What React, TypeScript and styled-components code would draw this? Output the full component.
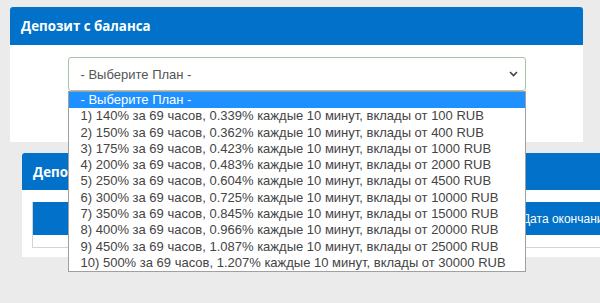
import React, { useState } from "react";
import styled, { createGlobalStyle } from "styled-components";

const GlobalStyle = createGlobalStyle`
  html {
    overflow: hidden;
    height: 100%;
  }
  body {
    margin: 0;
    padding: 0;
    min-height: 100%;
    background: #ebebeb;
    font-family: "Liberation Sans", Arial, sans-serif;
  }
`;

const Page = styled.div`
  padding: 7px 17px 0 10px;
  display: flex;
  flex-direction: column;
  gap: 11px;
  width: 600px;
  height: 303px;
  box-sizing: border-box;
`;

interface CardProps {
  indent?: number;
  wide?: boolean;
}
const Card = styled.section<CardProps>`
  margin-left: ${(p) => p.indent || 0}px;
  width: ${(p) => (p.wide ? "760px" : "auto")};
  flex-shrink: 0;
  background: #fff;
  border-radius: 3px 3px 0 0;
`;

interface HeadProps {
  h: number;
}
const CardHead = styled.header<HeadProps>`
  height: ${(p) => p.h}px;
  background: #0171c9;
  border-radius: 3px 3px 0 0;
  display: flex;
  align-items: center;
  padding-left: 11px;
  h2 {
    margin: 0;
    font-family: "Open Sans", "DejaVu Sans", sans-serif;
    font-weight: 700;
    font-size: 13.3px;
    color: #fff;
  }
`;

const FormBody = styled.div`
  height: 97px;
  box-sizing: border-box;
  padding-top: 12px;
  display: flex;
  justify-content: center;
`;

const SelectWrap = styled.div`
  position: relative;
  width: 458px;
  height: 34px;
`;

const SelectBox = styled.div`
  height: 34px;
  box-sizing: border-box;
  border: 1px solid #a8c3a8;
  border-radius: 3px;
  display: flex;
  align-items: center;
  justify-content: space-between;
  padding: 0 7px 0 12px;
  font-size: 13px;
  color: #555;
  background: #fff;
`;

const OptionList = styled.ul`
  position: absolute;
  top: 34px;
  left: 0;
  width: 458px;
  box-sizing: border-box;
  margin: 0;
  padding: 0;
  list-style: none;
  background: #fff;
  border: 1px solid #a0a0a0;
  z-index: 5;
`;

interface OptionProps {
  active: boolean;
}
const Option = styled.li<OptionProps>`
  height: 16.3px;
  line-height: 16.3px;
  padding: 0 12px;
  font-size: 13px;
  white-space: nowrap;
  color: ${(p) => (p.active ? "#fff" : "#444")};
  background: ${(p) => (p.active ? "#1e90ff" : "#fff")};
  cursor: default;
`;

const TableBody = styled.div`
  padding: 12px 0 9px 10px;
`;

const Table = styled.table`
  border-collapse: collapse;
  table-layout: fixed;
  width: 730px;
  font-size: 12px;
  border-left: 1px solid #d4d4d4;
  th {
    height: 33px;
    background: #0171c9;
    color: #fff;
    font-weight: 400;
    text-align: center;
    padding: 0;
    white-space: nowrap;
  }
  td {
    height: 12px;
    padding: 0;
    border-bottom: 1px solid #d4d4d4;
  }
`;

const plans = [
  ["140%", "0.339%", "100"],
  ["150%", "0.362%", "400"],
  ["175%", "0.423%", "1000"],
  ["200%", "0.483%", "2000"],
  ["250%", "0.604%", "4500"],
  ["300%", "0.725%", "10000"],
  ["350%", "0.845%", "15000"],
  ["400%", "0.966%", "20000"],
  ["450%", "1.087%", "25000"],
  ["500%", "1.207%", "30000"],
];

const columns = [
  { label: "План", w: 120 },
  { label: "Сумма", w: 120 },
  { label: "Прибыль", w: 120 },
  { label: "Дата открытия", w: 123 },
  { label: "Дата окончания", w: 100 },
  { label: "Статус", w: 147 },
];

export default function App() {
  const [active, setActive] = useState(0);
  return (
    <>
      <GlobalStyle />
      <Page>
        <Card>
          <CardHead h={38}>
            <h2>Депозит с баланса</h2>
          </CardHead>
          <FormBody>
            <SelectWrap>
              <SelectBox>
                <span>- Выберите План -</span>
                <svg width="9" height="6" viewBox="0 0 9 6">
                  <path
                    d="M1 1l3.5 3.5L8 1"
                    fill="none"
                    stroke="#444"
                    strokeWidth="1.6"
                  />
                </svg>
              </SelectBox>
              <OptionList>
                <Option active={active === 0} onMouseEnter={() => setActive(0)}>
                  - Выберите План -
                </Option>
                {plans.map((p, i) => (
                  <Option
                    key={i}
                    active={active === i + 1}
                    onMouseEnter={() => setActive(i + 1)}
                  >
                    {i + 1}) {p[0]} за 69 часов, {p[1]} каждые 10 минут, вклады от{" "}
                    {p[2]} RUB
                  </Option>
                ))}
              </OptionList>
            </SelectWrap>
          </FormBody>
        </Card>
        <Card indent={12} wide>
          <CardHead h={37}>
            <h2>Депозиты</h2>
          </CardHead>
          <TableBody>
            <Table>
              <thead>
                <tr>
                  {columns.map((c) => (
                    <th key={c.label} style={{ width: c.w }}>
                      {c.label}
                    </th>
                  ))}
                </tr>
              </thead>
              <tbody>
                <tr>
                  <td colSpan={columns.length}></td>
                </tr>
              </tbody>
            </Table>
          </TableBody>
        </Card>
      </Page>
    </>
  );
}
